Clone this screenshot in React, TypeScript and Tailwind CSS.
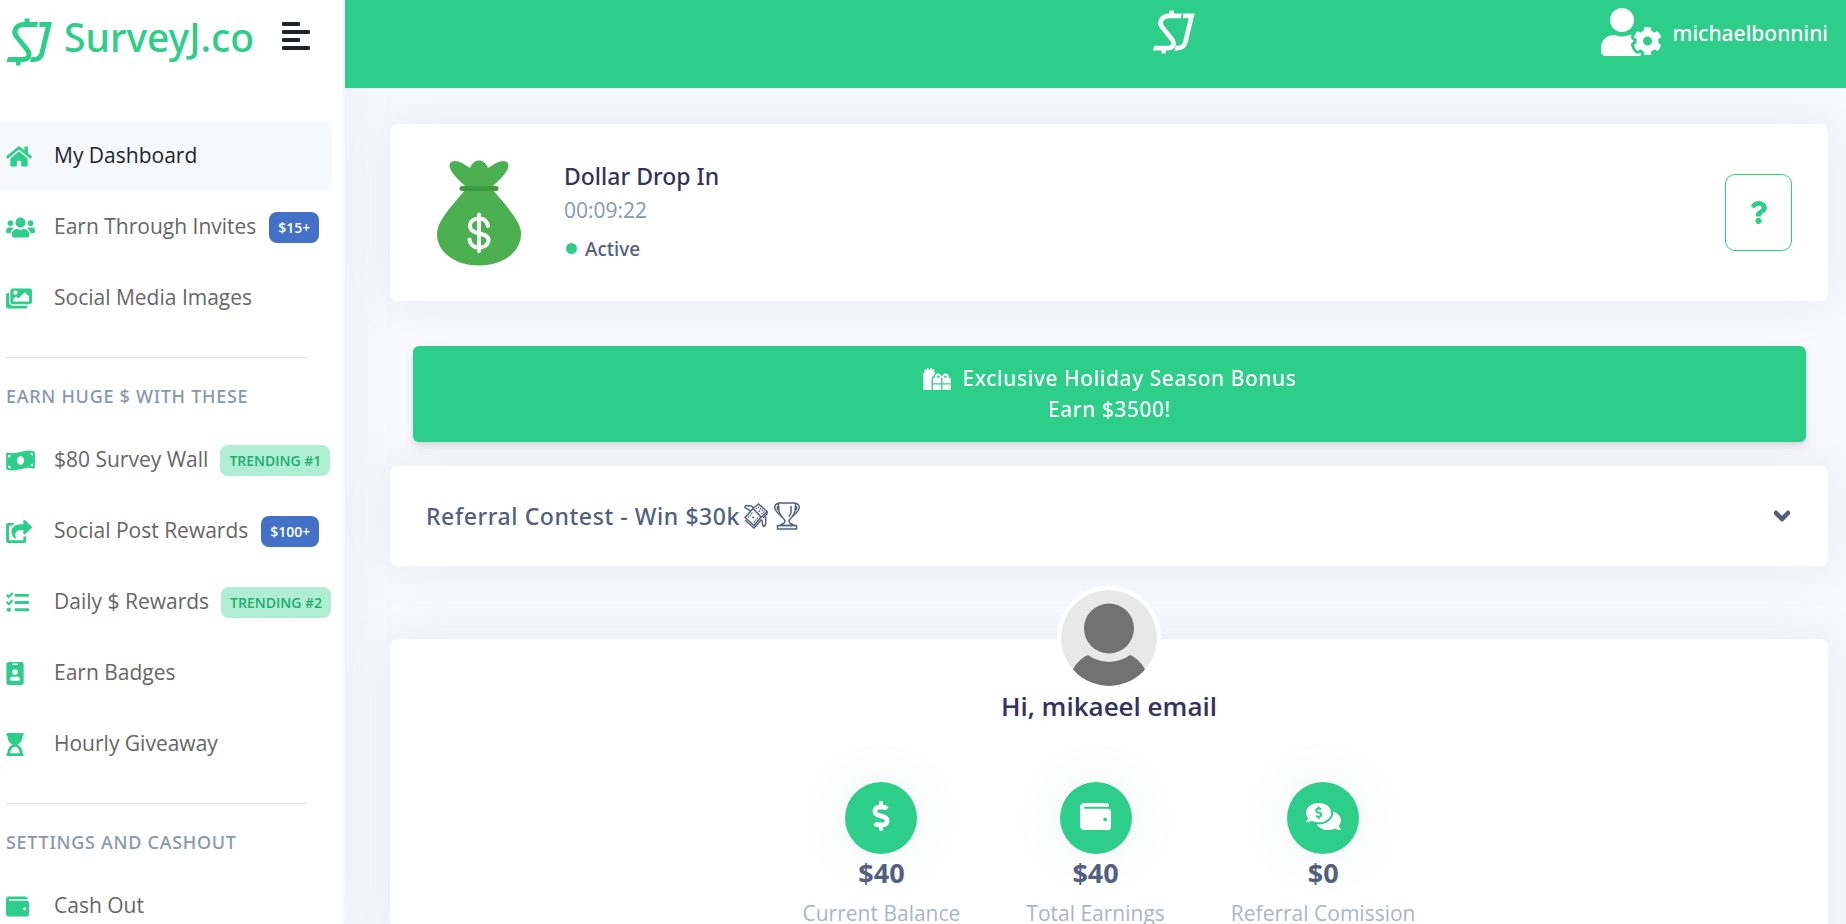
import type { ReactNode } from "react";
import {
  FaChevronDown,
  FaCommentsDollar,
  FaDollarSign,
  FaGifts,
  FaHome,
  FaHourglassStart,
  FaIdBadge,
  FaImages,
  FaMoneyBillWave,
  FaQuestion,
  FaShareSquare,
  FaTasks,
  FaUserCog,
  FaUsers,
  FaWallet,
} from "react-icons/fa";

type Badge = { text: string; tone: "blue" | "green" };
type NavItem = { label: string; icon: ReactNode; active?: boolean; badge?: Badge };

const primaryItems: NavItem[] = [
  { label: "My Dashboard", icon: <FaHome className="h-[23px] w-[26px]" />, active: true },
  { label: "Earn Through Invites", icon: <FaUsers className="h-[23px] w-[29px]" />, badge: { text: "$15+", tone: "blue" } },
  { label: "Social Media Images", icon: <FaImages className="h-[23px] w-[26px]" /> },
];

const earnItems: NavItem[] = [
  {
    label: "$80 Survey Wall",
    icon: <FaMoneyBillWave className="h-[23px] w-[29px]" />,
    badge: { text: "TRENDING #1", tone: "green" },
  },
  {
    label: "Social Post Rewards",
    icon: <FaShareSquare className="h-[23px] w-[26px]" />,
    badge: { text: "$100+", tone: "blue" },
  },
  {
    label: "Daily $ Rewards",
    icon: <FaTasks className="size-[23px]" />,
    badge: { text: "TRENDING #2", tone: "green" },
  },
  { label: "Earn Badges", icon: <FaIdBadge className="h-[23px] w-[18px]" /> },
  { label: "Hourly Giveaway", icon: <FaHourglassStart className="h-[23px] w-[18px]" /> },
];

const settingsItems: NavItem[] = [{ label: "Cash Out", icon: <FaWallet className="size-[23px]" /> }];

const stats = [
  { label: "Current Balance", value: "$40", icon: <FaDollarSign className="h-[30px] w-[18px]" /> },
  { label: "Total Earnings", value: "$40", icon: <FaWallet className="h-[31px] w-[31px]" /> },
  { label: "Referral Comission", value: "$0", icon: <FaCommentsDollar className="h-[31px] w-[35px]" /> },
];

function Logo({ className }: { className: string }) {
  return (
    <svg viewBox="0 0 46 48" className={className} fill="none" stroke="currentColor" aria-hidden="true">
      <path d="M30 6.400H18.500C10 6.400 6.500 13.500 10.500 18.500L21 31.500C25.500 37.500 22 41.600 16.500 41.600H3" strokeWidth="5" />
      <path d="M34 6.400H42.800L36 35C34.800 40 32 41.600 27 41.600" strokeWidth="5" />
      <path d="M30 3.900H32L31 8.900H30zM34.500 3.900H33.500L33.300 8.900H34.500zM0.500 44.100L2 39.100H4V44.100zM24 44.100L25.500 39.100H28V44.100z" fill="currentColor" stroke="none" />
      <path d="M18.500 0.500h5v4h-5zM10 43.500h4.500v4h-4.500z" fill="currentColor" stroke="none" />
    </svg>
  );
}

function MoneyBag() {
  return (
    <svg viewBox="0 0 84 106" className="h-[106px] w-[84px] shrink-0" aria-hidden="true">
      <path
        d="M28 26C18 17 12 10 12.500 5C13 0 20 0 25 3L33 8C35 3 38 0.500 42 0.500C46 0.500 49 3 51 8L59 3C65 0 71 0 71.500 5C72 10 66 17 56 26L56 30C64 40 74 50 80 61C83 66 84 70 84 74C84 92 66 105.500 42 105.500C18 105.500 0 92 0 74C0 70 1 66 4 61C10 50 20 40 28 30Z"
        fill="#4caf50"
      />
      <rect x="22.500" y="26" width="39" height="5" rx="2.500" fill="#3d9a41" />
      <path
        d="M51 66C50 61 47 58.500 42 58.500C36.500 58.500 33 61.500 33 66C33 76 51.500 71 51.500 80C51.500 84.500 47.500 87.500 42 87.500C36.500 87.500 33 84.500 32.500 79.500M42 54.500V91"
        fill="none"
        stroke="#fafafa"
        strokeWidth="4"
        strokeLinecap="round"
      />
    </svg>
  );
}

function FlyingMoney() {
  return (
    <svg viewBox="0 0 24 26" className="h-[26px] w-6" fill="none" stroke="currentColor" role="img" aria-label="Money with wings">
      <path d="M9 5.500L14.500 1L23 8.500L17 14.500" strokeWidth="1.500" />
      <path d="M1 14.500L9 5.500L17 14L10 22.500Z" strokeWidth="1.500" />
      <path d="M1 17L10 25L17.500 16.500M23 8.500V11L19 15" strokeWidth="1.500" />
      <path d="M4 14.500L9 9M9.800 19.500L14 14.500" strokeWidth="1.200" strokeDasharray="1.500 1" />
      <path d="M12 6L14.500 4L20 8.800L17 11.500" strokeWidth="1.200" strokeDasharray="1.500 1" />
      <path d="M8.500 13.800L9.800 15.200M14.800 7.500L16 8.600" strokeWidth="1.500" />
      <path d="M6.500 8.500L4.500 6.500L1 4.500C0.500 2.500 3 2 5 3C7 2.200 8.500 3 9.500 5" strokeWidth="1.500" />
      <path d="M17.500 16.500C19 18.500 18 22.500 19.500 23.300C22 23.500 22 19 21.500 13.500" strokeWidth="1.500" />
    </svg>
  );
}

function Trophy() {
  return (
    <svg viewBox="0 0 26 28" className="h-7 w-[26px]" fill="none" stroke="currentColor" strokeWidth="1.500" role="img" aria-label="Trophy">
      <path d="M5 1H21C22 1.500 21.500 3 21.500 5C21.500 10 19.500 14 16.500 16.500C14.500 18.500 14.500 20 16.500 21.500C18 22.300 19.500 22.500 20 23.500H6C6.500 22.500 8 22.300 9.500 21.500C11.500 20 11.500 18.500 9.500 16.500C6.500 14 4.500 10 4.500 5C4.500 3 4 1.500 5 1Z" />
      <path d="M3.500 23.500H22.500V27H3.500ZM5 1.500C2 1.500 0.800 3 0.800 5.500C1 9.500 4.500 11.500 7.500 14M21 1.500C24 1.500 25.200 3 25.200 5.500C25 9.500 21.500 11.500 18.500 14" />
      <path d="M17 4V10C17 12 16 13.500 14.500 14.500" />
      <path d="M4 4V8M22 4V8" strokeWidth="2.500" />
    </svg>
  );
}

function Avatar() {
  return (
    <svg viewBox="0 0 96 96" className="size-[104px] rounded-full border-4 border-white bg-white" role="img" aria-label="Profile picture">
      <clipPath id="avatar-clip">
        <circle cx="48" cy="48" r="48" />
      </clipPath>
      <g clipPath="url(#avatar-clip)">
        <rect width="96" height="96" fill="#e8e8e8" />
        <circle cx="48" cy="38.500" r="25" fill="#727272" />
        <path d="M27 65C39 74 57 74 69 65C76 68 83 75 86 84V96H10V84C13 75 20 68 27 65Z" fill="#727272" />
      </g>
    </svg>
  );
}

function NavRow({ item }: { item: NavItem }) {
  return (
    <li>
      <a
        href="#"
        className={
          item.active
            ? "mr-[11px] flex h-[68px] items-center rounded-r-lg bg-[#f6f9fc] pl-1.5 text-[#212529]"
            : "mr-[11px] flex h-[68px] items-center pl-1.5 text-[#666666]"
        }
      >
        <span className="w-12 shrink-0 text-[#2dce89]">{item.icon}</span>
        <span className="text-[21px] whitespace-nowrap">{item.label}</span>
        {item.badge && (
          <span
            className={
              item.badge.tone === "blue"
                ? "ml-[13px] flex h-[31px] items-center rounded-lg bg-[#4271c7] px-[9px] text-[14px] font-semibold text-white"
                : "ml-3 flex h-[31px] items-center rounded-lg bg-[#b0eed3] px-[9px] text-[14px] font-semibold whitespace-nowrap text-[#1aae6f]"
            }
          >
            {item.badge.text}
          </span>
        )}
      </a>
    </li>
  );
}

function NavSection({ title, items }: { title?: string; items: NavItem[] }) {
  return (
    <section>
      {title && (
        <>
          <hr className="mr-[35px] ml-1.5 border-[#e3e3e3]" />
          <h2 className="mt-[23px] mb-[15px] pl-1.5 font-['Noto_Sans',sans-serif] text-[18px] leading-[30px] font-medium tracking-[0.04em] text-[#8898aa]">
            {title}
          </h2>
        </>
      )}
      <ul className="flex flex-col gap-[3px]">
        {items.map((item) => (
          <NavRow key={item.label} item={item} />
        ))}
      </ul>
    </section>
  );
}

export default function App() {
  return (
    <div className="flex h-screen overflow-hidden bg-[#f8f9fe] font-['Open_Sans',sans-serif]">
      <aside className="z-10 flex w-[345px] shrink-0 flex-col overflow-y-auto border-r-2 border-[#f6f6fa] bg-white shadow-[0_0_46px_rgba(136,152,170,0.15)] [scrollbar-width:none]">
        <div className="flex h-[122px] shrink-0 items-start pt-2 pl-1.5 text-[#2dce89]">
          <Logo className="mt-2.5 h-12 w-[46px]" />
          <a href="#" className="ml-3 font-['Noto_Sans',sans-serif] text-[39px] leading-[57px] font-medium">SurveyJ.co</a>
          <button type="button" aria-label="Toggle menu" className="mt-3.5 ml-7 flex w-7 flex-col gap-1">
            <span className="h-1 w-[18px] rounded-[1px] bg-[#212529]" />
            <span className="h-1 w-7 rounded-[1px] bg-[#212529]" />
            <span className="h-1 w-[18px] rounded-[1px] bg-[#212529]" />
            <span className="h-1 w-7 rounded-[1px] bg-[#212529]" />
          </button>
        </div>
        <nav className="flex flex-col gap-[25px]" aria-label="Main">
          <NavSection items={primaryItems} />
          <NavSection title="EARN HUGE $ WITH THESE" items={earnItems} />
          <NavSection title="SETTINGS AND CASHOUT" items={settingsItems} />
        </nav>
      </aside>

      <div className="flex min-w-0 flex-1 flex-col">
        <header className="z-20 grid h-22 shrink-0 grid-cols-[1fr_auto_1fr] items-start bg-[#2dce89] pr-[18px] pl-[174px] text-white">
          <span />
          <Logo className="mt-2.5 h-11 w-[43px]" />
          <button type="button" className="mt-2 flex items-center gap-3 justify-self-end font-['Noto_Sans',sans-serif] text-[21px] font-medium">
            <FaUserCog className="h-12 w-[60px]" />
            <span className="pt-1">michaelbonnini</span>
          </button>
        </header>

        <main className="flex min-h-0 flex-1 flex-col overflow-y-auto pt-9 pr-[18px] pl-[45px] [scrollbar-width:none]">
          <section className="flex h-[177px] shrink-0 items-center rounded-lg bg-white px-9 shadow-[0_0_46px_rgba(136,152,170,0.15)]">
            <div className="flex flex-1 items-center gap-[43px] pl-[11px]">
              <MoneyBag />
              <div className="pb-1">
                <h3 className="font-['Noto_Sans',sans-serif] text-[23px] leading-[34px] font-medium text-[#32325d]">Dollar Drop In</h3>
                <p className="text-[21px] leading-[34px] text-[#8898aa]">00:09:22</p>
                <p className="mt-2 flex items-center gap-2 pl-0.5 font-['Noto_Sans',sans-serif] text-[19px] leading-7 font-medium text-[#525f7f]">
                  <span className="size-[11px] rounded-full bg-[#2dce89]" />
                  Active
                </p>
              </div>
            </div>
            <button
              type="button"
              aria-label="Help"
              className="flex h-[77px] w-[67px] items-center justify-center rounded-[10px] border border-[#2dce89] text-[23px] text-[#2dce89]"
            >
              <FaQuestion />
            </button>
          </section>

          <button
            type="button"
            className="z-10 mt-[45px] mr-[22px] ml-[23px] h-24 shrink-0 rounded-md bg-[#2dce89] font-['Noto_Sans',sans-serif] text-[21px] leading-[31px] font-medium tracking-wide text-white shadow-[0_5px_9px_rgba(50,50,93,0.11),0_1px_4px_rgba(0,0,0,0.08)]"
          >
            <span className="flex items-center justify-center gap-3">
              <FaGifts className="h-[22px] w-7" />
              Exclusive Holiday Season Bonus
            </span>
            Earn $3500!
          </button>

          <button
            type="button"
            aria-expanded="false"
            className="mt-6 flex h-[100px] shrink-0 items-center justify-between rounded-lg bg-white px-9 font-['Noto_Sans',sans-serif] text-[23px] font-medium tracking-wide text-[#525f7f] shadow-[0_0_46px_rgba(136,152,170,0.15)]"
          >
            <span className="flex items-center">
              Referral Contest - Win $30k
              <span className="ml-1 flex items-center gap-1.5">
                <FlyingMoney />
                <Trophy />
              </span>
            </span>
            <FaChevronDown className="mr-0.5 h-[18px] w-4" strokeWidth={50} />
          </button>

          <section className="mt-[73px] flex shrink-0 flex-col items-center rounded-lg bg-white pb-16 shadow-[0_0_46px_rgba(136,152,170,0.15)]">
            <div className="-mt-[53px]">
              <Avatar />
            </div>
            <h1 className="text-[26px] leading-8 font-semibold text-[#32325d]">Hi, mikaeel email</h1>
            <dl className="mt-[60px] flex gap-[66px]">
              {stats.map((stat) => (
                <div key={stat.label} className="flex flex-col items-center">
                  <span className="flex size-[72px] items-center justify-center rounded-full bg-[#2dce89] pb-1 text-white shadow-[0_0_46px_rgba(136,152,170,0.15)]">
                    {stat.icon}
                  </span>
                  <dd className="text-[27px] leading-[38px] font-bold text-[#525f7f]">{stat.value}</dd>
                  <dt className="mt-1 text-[21px] leading-[34px] text-[#adb5bd]">{stat.label}</dt>
                </div>
              ))}
            </dl>
          </section>
        </main>
      </div>
    </div>
  );
}
